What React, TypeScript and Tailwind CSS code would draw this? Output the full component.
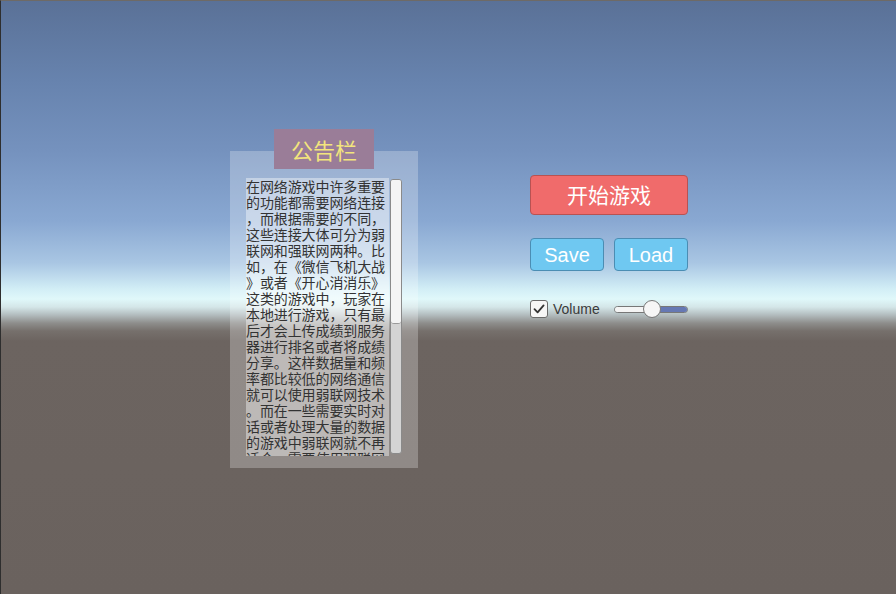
import React from "react";

const lines = [
  "在网络游戏中许多重要",
  "的功能都需要网络连接",
  "，而根据需要的不同，",
  "这些连接大体可分为弱",
  "联网和强联网两种。比",
  "如，在《微信飞机大战",
  "》或者《开心消消乐》",
  "这类的游戏中，玩家在",
  "本地进行游戏，只有最",
  "后才会上传成绩到服务",
  "器进行排名或者将成绩",
  "分享。这样数据量和频",
  "率都比较低的网络通信",
  "就可以使用弱联网技术",
  "。而在一些需要实时对",
  "话或者处理大量的数据",
  "的游戏中弱联网就不再",
  "适合，需要使用强联网",
];

function Notice() {
  return (
    <div className="flex flex-col items-center w-[188px]">
      <div className="relative z-10 w-[100px] h-[40px] bg-[#9a7d98] flex items-center justify-center text-[22px] text-[#f3e57c] font-['Noto_Sans_CJK_SC',sans-serif]">
        公告栏
      </div>
      <div className="-mt-[18px] w-[188px] h-[317px] bg-white/25 pl-[16px] pt-[27px] flex gap-[1px]">
        <div className="w-[143px] h-[278px] bg-white/40 overflow-hidden text-[14px] leading-[16px] text-[#333333] font-['Noto_Sans_CJK_SC',sans-serif]">
          {lines.map((l, i) => (
            <div key={i} className="whitespace-nowrap tracking-[-0.1px]">{l}</div>
          ))}
        </div>
        <div className="mt-[1px] w-[12px] h-[275px] rounded-[3px] border border-[#8a8a8a] bg-[#d4d4d4] overflow-hidden">
          <div className="h-[144px] bg-[#f4f4f4] border-b border-[#9a9a9a] rounded-b-[3px]" />
        </div>
      </div>
    </div>
  );
}

function Controls() {
  return (
    <div className="flex flex-col w-[158px] mt-[46px] font-['Liberation_Sans',Arial,sans-serif]">
      <button className="h-[40px] w-[158px] rounded-[4px] border border-[#b85252] bg-[#f06b6b] text-white text-[21px] font-['Noto_Sans_CJK_SC',sans-serif] flex items-center justify-center">
        开始游戏
      </button>
      <div className="flex gap-[10px] mt-[23px]">
        <button className="h-[33px] w-[74px] rounded-[4px] border border-[#4b8db3] bg-[#6fc8f1] text-white text-[20px] flex items-center justify-center">
          Save
        </button>
        <button className="h-[33px] w-[74px] rounded-[4px] border border-[#4b8db3] bg-[#6fc8f1] text-white text-[20px] flex items-center justify-center">
          Load
        </button>
      </div>
      <div className="flex items-center mt-[29px] h-[18px]">
        <div className="w-[18px] h-[18px] rounded-[3px] border border-[#6a6a6a] bg-[#f6f6f6] flex items-center justify-center">
          <svg width="14" height="14" viewBox="0 0 14 14">
            <path d="M2.5 7.2 L5.6 10.3 L11.6 3.4" fill="none" stroke="#333" strokeWidth="1.8" strokeLinecap="round" strokeLinejoin="round" />
          </svg>
        </div>
        <span className="ml-[5px] text-[14px] text-[#3a3a3a]">Volume</span>
        <div className="relative ml-[14px] w-[74px] h-[18px] flex items-center">
          <div className="w-full h-[7px] rounded-full border border-[#777] overflow-hidden flex">
            <div className="w-[38px] bg-[#f4f4f4]" />
            <div className="flex-1 bg-[#6678b3]" />
          </div>
          <div className="absolute left-[29px] top-0 w-[18px] h-[18px] rounded-full bg-[#f6f6f6] border border-[#777]" />
        </div>
      </div>
    </div>
  );
}

export default function App() {
  return (
    <div className="w-[896px] h-[594px] overflow-hidden border-t border-t-[#6e6a66] border-l border-l-[#2e2e2e] bg-[linear-gradient(to_bottom,#5a7197_0px,#6783ae_80px,#7592be_150px,#89a8d2_220px,#a9c6e3_262px,#d2eef6_288px,#e0f8fa_298px,#d4e6e8_306px,#b2bcbe_314px,#8e8e8c_322px,#76706c_330px,#6c6460_340px,#6a625e_594px)]">
      <div className="flex pl-[229px] pt-[128px] gap-[112px]">
        <Notice />
        <Controls />
      </div>
    </div>
  );
}
